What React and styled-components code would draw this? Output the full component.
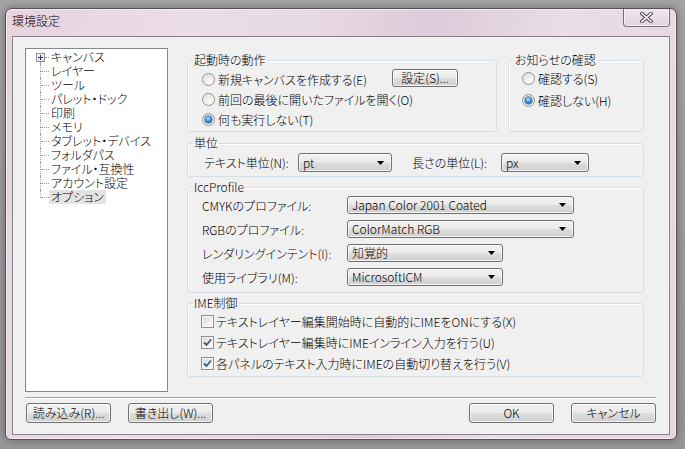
import React from 'react';
import styled, { createGlobalStyle, css } from 'styled-components';

const GlobalStyle = createGlobalStyle`
  html, body { margin: 0; padding: 0; }
  body {
    width: 685px;
    height: 449px;
    overflow: hidden;
    background: linear-gradient(180deg, #a4a4a4 0%, #9b9b9b 60%, #979797 100%);
    font-family: "Noto Sans CJK JP", "Noto Sans", sans-serif;
    font-size: 12px;
    font-weight: 300;
    color: #000;
    font-feature-settings: "palt";
  }
  *, *::before, *::after { box-sizing: border-box; }
`;

const bevel = css`
  border: 1px solid #707070;
  border-radius: 3px;
  background: linear-gradient(180deg, #f2f2f2 0%, #ebebeb 48%, #dddddd 52%, #cfcfcf 100%);
  box-shadow: inset 0 0 0 1px rgba(255, 255, 255, 0.75);
`;

const Window = styled.div`
  margin: 8px 0 0 5px;
  width: 672px;
  height: 432px;
  border: 1px solid #55505a;
  border-radius: 7px 7px 6px 6px;
  background: linear-gradient(100deg, #e5d3e0 0%, #ebdde8 25%, #e8dae5 40%, #dccbd8 58%, #e9dde7 75%, #e6d6e2 100%);
  box-shadow: 0 0 9px rgba(0, 0, 0, 0.35), inset 0 0 0 1px rgba(255, 255, 255, 0.55);
  padding: 0 6px 4px 6px;
  display: flex;
  flex-direction: column;
`;

const TitleBar = styled.div`
  height: 27px;
  display: flex;
  justify-content: space-between;
  align-items: flex-start;
`;

const Title = styled.div`
  margin-top: 5px;
  line-height: 14px;
  font-size: 12px;
  font-feature-settings: normal;
`;

const CloseButton = styled.div`
  width: 47px;
  height: 18px;
  border: 1px solid #7b6f7a;
  border-top: none;
  border-radius: 0 0 4px 4px;
  background: linear-gradient(180deg, #f1e8ef 0%, #e9dce6 50%, #e2d2de 100%);
  box-shadow: inset 0 -1px 0 rgba(255, 255, 255, 0.7), inset 1px 0 0 rgba(255, 255, 255, 0.6), inset -1px 0 0 rgba(255, 255, 255, 0.6);
  display: flex;
  align-items: center;
  justify-content: center;
`;

const Client = styled.div`
  flex: 1;
  border: 1px solid #898389;
  background: #f0f0f0;
  padding: 11px 13px 0 12px;
  display: flex;
  flex-direction: column;
`;

const TopRow = styled.div`
  display: flex;
  align-items: flex-start;
`;

const TreeBox = styled.ul`
  width: 143px;
  height: 344px;
  margin: 0;
  padding: 1px 0 0 0;
  list-style: none;
  border: 1px solid #828790;
  background: #fff;
  flex: none;
`;

const TreeItem = styled.li`
  position: relative;
  height: 14px;
  line-height: 14px;
  padding-left: 23px;
  white-space: nowrap;
  &::before {
    content: '';
    position: absolute;
    left: 14px;
    top: ${(p) => (p.$first ? '12px' : '0')};
    height: ${(p) => (p.$first ? '2px' : p.$last ? '8px' : '14px')};
    border-left: 1px dotted #a0a0a0;
  }
  &::after {
    content: '';
    position: absolute;
    left: ${(p) => (p.$first ? '19px' : '15px')};
    width: ${(p) => (p.$first ? '4px' : '8px')};
    top: 7px;
    border-top: 1px dotted #a0a0a0;
  }
`;

const Expander = styled.svg`
  position: absolute;
  left: 10px;
  top: 3px;
  display: block;
`;

const TreeText = styled.span`
  display: inline-block;
  height: 14px;
  line-height: 14px;
  padding: 0 2px;
  background: ${(p) => (p.$selected ? '#e3e3e3' : 'transparent')};
`;

const MainCol = styled.div`
  margin-left: 19px;
  width: 457px;
  padding-top: 5px;
  display: flex;
  flex-direction: column;
`;

const GroupRow = styled.div`
  display: flex;
  gap: 11px;
`;

const Group = styled.fieldset`
  margin: ${(p) => p.$mt || 0}px 0 0 0;
  padding: 0;
  min-width: 0;
  width: ${(p) => p.$w}px;
  border: 1px solid #d5dfe5;
  border-radius: 3px;
  box-shadow: inset 1px 1px 0 #fff;
`;

const Legend = styled.legend`
  margin-left: 5px;
  padding: 0 1px;
  line-height: 14px;
  font-size: 12px;
`;

const GroupBody = styled.div`
  padding: ${(p) => p.$pad};
  display: flex;
  flex-direction: column;
  gap: ${(p) => p.$gap || 0}px;
`;

const OptionLine = styled.div`
  display: flex;
  align-items: center;
  height: ${(p) => p.$h || 20}px;
`;

const OptionLabel = styled.label`
  display: flex;
  align-items: center;
  gap: ${(p) => p.$gap || 3}px;
  white-space: nowrap;
`;

const RadioMark = styled.span`
  position: relative;
  flex: none;
  width: 13px;
  height: 13px;
  border-radius: 50%;
  border: 1px solid #8e8f8f;
  background: radial-gradient(circle at 65% 70%, #ffffff 0%, #ececec 45%, #cdcdcd 100%);
  box-shadow: inset 0 0 0 1px rgba(255, 255, 255, 0.6);
  ${(p) =>
    p.$checked &&
    css`
      &::after {
        content: '';
        position: absolute;
        left: 2px;
        top: 2px;
        width: 7px;
        height: 7px;
        border-radius: 50%;
        background: radial-gradient(circle at 45% 35%, #b6e3ff 0%, #3c93dc 45%, #125aa3 80%, #0b3f78 100%);
        box-shadow: 0 0 0 0.5px #1c3e68;
      }
    `}
`;

const CheckMark = styled.span`
  flex: none;
  width: 13px;
  height: 13px;
  border: 1px solid #8e8f8f;
  background: linear-gradient(135deg, #d6d6d6 0%, #eeeeee 55%, #fbfbfb 100%);
  box-shadow: inset 0 0 0 1px #f6f6f6;
  display: flex;
  align-items: center;
  justify-content: center;
`;

const PushButton = styled.button`
  ${bevel}
  width: ${(p) => p.$w}px;
  height: ${(p) => p.$h || 20}px;
  margin: 0;
  padding: 0;
  font-family: inherit;
  font-size: 12px;
  font-weight: 300;
  font-feature-settings: "palt";
  color: #000;
  line-height: 14px;
  flex: none;
`;

const SettingButton = styled(PushButton)`
  margin-left: auto;
  margin-right: 38px;
  align-self: flex-start;
`;

const Combo = styled.div`
  ${bevel}
  width: ${(p) => p.$w}px;
  height: ${(p) => p.$h || 18}px;
  flex: none;
  display: flex;
  align-items: center;
  justify-content: space-between;
  padding: 0 7px 0 4px;
  line-height: 14px;
  white-space: nowrap;
`;

const FieldLabel = styled.span`
  width: ${(p) => p.$w}px;
  margin-left: ${(p) => p.$ml || 0}px;
  flex: none;
  white-space: nowrap;
`;

const FieldRow = styled.div`
  display: flex;
  align-items: center;
  height: ${(p) => p.$h || 18}px;
`;

const Separator = styled.div`
  margin-top: 5px;
  width: 631px;
  height: 2px;
  border-top: 1px solid #a0a0a0;
  border-bottom: 1px solid #ffffff;
`;

const ButtonBar = styled.div`
  margin-top: 4px;
  width: 631px;
  padding-left: 1px;
  display: flex;
  gap: 17px;
`;

const Spacer = styled.div`
  flex: 1;
`;

const Arrow = () => (
  <svg width="7" height="4" viewBox="0 0 7 4">
    <polygon points="0,0 7,0 3.5,4" fill="#000" />
  </svg>
);

const CloseIcon = () => (
  <svg width="13" height="11" viewBox="0 0 13 11">
    <path d="M2 1.5 L11 9.5 M11 1.5 L2 9.5" stroke="#4a4550" strokeWidth="3.6" strokeLinecap="square" />
    <path d="M2 1.5 L11 9.5 M11 1.5 L2 9.5" stroke="#ffffff" strokeWidth="1.6" strokeLinecap="square" />
  </svg>
);

const Check = () => (
  <svg width="9" height="9" viewBox="0 0 9 9">
    <path d="M1 4.5 L3.5 7 L8 1.5" stroke="#3b5a8c" strokeWidth="1.8" fill="none" />
  </svg>
);

const Radio = ({ checked, children }) => (
  <OptionLabel>
    <RadioMark $checked={checked} />
    <span>{children}</span>
  </OptionLabel>
);

const CheckOption = ({ checked, children }) => (
  <OptionLine $h={21}>
    <OptionLabel $gap={2}>
      <CheckMark>{checked && <Check />}</CheckMark>
      <span>{children}</span>
    </OptionLabel>
  </OptionLine>
);

const treeItems = [
  'キャンバス',
  'レイヤー',
  'ツール',
  'パレット・ドック',
  '印刷',
  'メモリ',
  'タブレット・デバイス',
  'フォルダパス',
  'ファイル・互換性',
  'アカウント設定',
  'オプション',
];

const iccRows = [
  { label: 'CMYKのプロファイル:', value: 'Japan Color 2001 Coated', w: 227 },
  { label: 'RGBのプロファイル:', value: 'ColorMatch RGB', w: 227 },
  { label: 'レンダリングインテント(I):', value: '知覚的', w: 156 },
  { label: '使用ライブラリ(M):', value: 'MicrosoftICM', w: 156 },
];

export default function App() {
  return (
    <>
      <GlobalStyle />
      <Window>
        <TitleBar>
          <Title>環境設定</Title>
          <CloseButton>
            <CloseIcon />
          </CloseButton>
        </TitleBar>
        <Client>
          <TopRow>
            <TreeBox>
              {treeItems.map((t, i) => (
                <TreeItem key={t} $first={i === 0} $last={i === treeItems.length - 1}>
                  {i === 0 && (
                    <Expander width="9" height="9" viewBox="0 0 9 9">
                      <defs>
                        <linearGradient id="exg" x1="0" y1="0" x2="1" y2="1">
                          <stop offset="0" stopColor="#ffffff" />
                          <stop offset="1" stopColor="#d8d8d8" />
                        </linearGradient>
                      </defs>
                      <rect x="0.5" y="0.5" width="8" height="8" fill="url(#exg)" stroke="#919191" />
                      <path d="M2 4.5h5M4.5 2v5" stroke="#1d3787" />
                    </Expander>
                  )}
                  <TreeText $selected={i === treeItems.length - 1}>{t}</TreeText>
                </TreeItem>
              ))}
            </TreeBox>
            <MainCol>
              <GroupRow>
                <Group $w={310}>
                  <Legend>起動時の動作</Legend>
                  <GroupBody $pad="2px 0 2px 14px">
                    <OptionLine>
                      <Radio>新規キャンバスを作成する(E)</Radio>
                      <SettingButton $w={66} $h={18}>設定(S)...</SettingButton>
                    </OptionLine>
                    <OptionLine>
                      <Radio>前回の最後に開いたファイルを開く(O)</Radio>
                    </OptionLine>
                    <OptionLine>
                      <Radio checked>何も実行しない(T)</Radio>
                    </OptionLine>
                  </GroupBody>
                </Group>
                <Group $w={136}>
                  <Legend>お知らせの確認</Legend>
                  <GroupBody $pad="1px 0 2px 13px" $gap={2}>
                    <OptionLine>
                      <Radio>確認する(S)</Radio>
                    </OptionLine>
                    <OptionLine>
                      <Radio checked>確認しない(H)</Radio>
                    </OptionLine>
                  </GroupBody>
                </Group>
              </GroupRow>

              <Group $w={457} $mt={4}>
                <Legend>単位</Legend>
                <GroupBody $pad="3px 0 4px 16px">
                  <FieldRow $h={19}>
                    <FieldLabel $w={94}>テキスト単位(N):</FieldLabel>
                    <Combo $w={94} $h={19}>
                      <span>pt</span>
                      <Arrow />
                    </Combo>
                    <FieldLabel $w={89} $ml={20}>長さの単位(L):</FieldLabel>
                    <Combo $w={88} $h={19}>
                      <span>px</span>
                      <Arrow />
                    </Combo>
                  </FieldRow>
                </GroupBody>
              </Group>

              <Group $w={457} $mt={3}>
                <Legend>IccProfile</Legend>
                <GroupBody $pad="2px 0 6px 14px" $gap={6}>
                  {iccRows.map((r) => (
                    <FieldRow key={r.label}>
                      <FieldLabel $w={145}>{r.label}</FieldLabel>
                      <Combo $w={r.w}>
                        <span>{r.value}</span>
                        <Arrow />
                      </Combo>
                    </FieldRow>
                  ))}
                </GroupBody>
              </Group>

              <Group $w={457} $mt={3}>
                <Legend>IME制御</Legend>
                <GroupBody $pad="1px 0 2px 13px">
                  <CheckOption>テキストレイヤー編集開始時に自動的にIMEをONにする(X)</CheckOption>
                  <CheckOption checked>テキストレイヤー編集時にIMEインライン入力を行う(U)</CheckOption>
                  <CheckOption checked>各パネルのテキスト入力時にIMEの自動切り替えを行う(V)</CheckOption>
                </GroupBody>
              </Group>
            </MainCol>
          </TopRow>
          <Separator />
          <ButtonBar>
            <PushButton $w={85}>読み込み(R)...</PushButton>
            <PushButton $w={85}>書き出し(W)...</PushButton>
            <Spacer />
            <PushButton $w={85}>OK</PushButton>
            <PushButton $w={85}>キャンセル</PushButton>
          </ButtonBar>
        </Client>
      </Window>
    </>
  );
}
